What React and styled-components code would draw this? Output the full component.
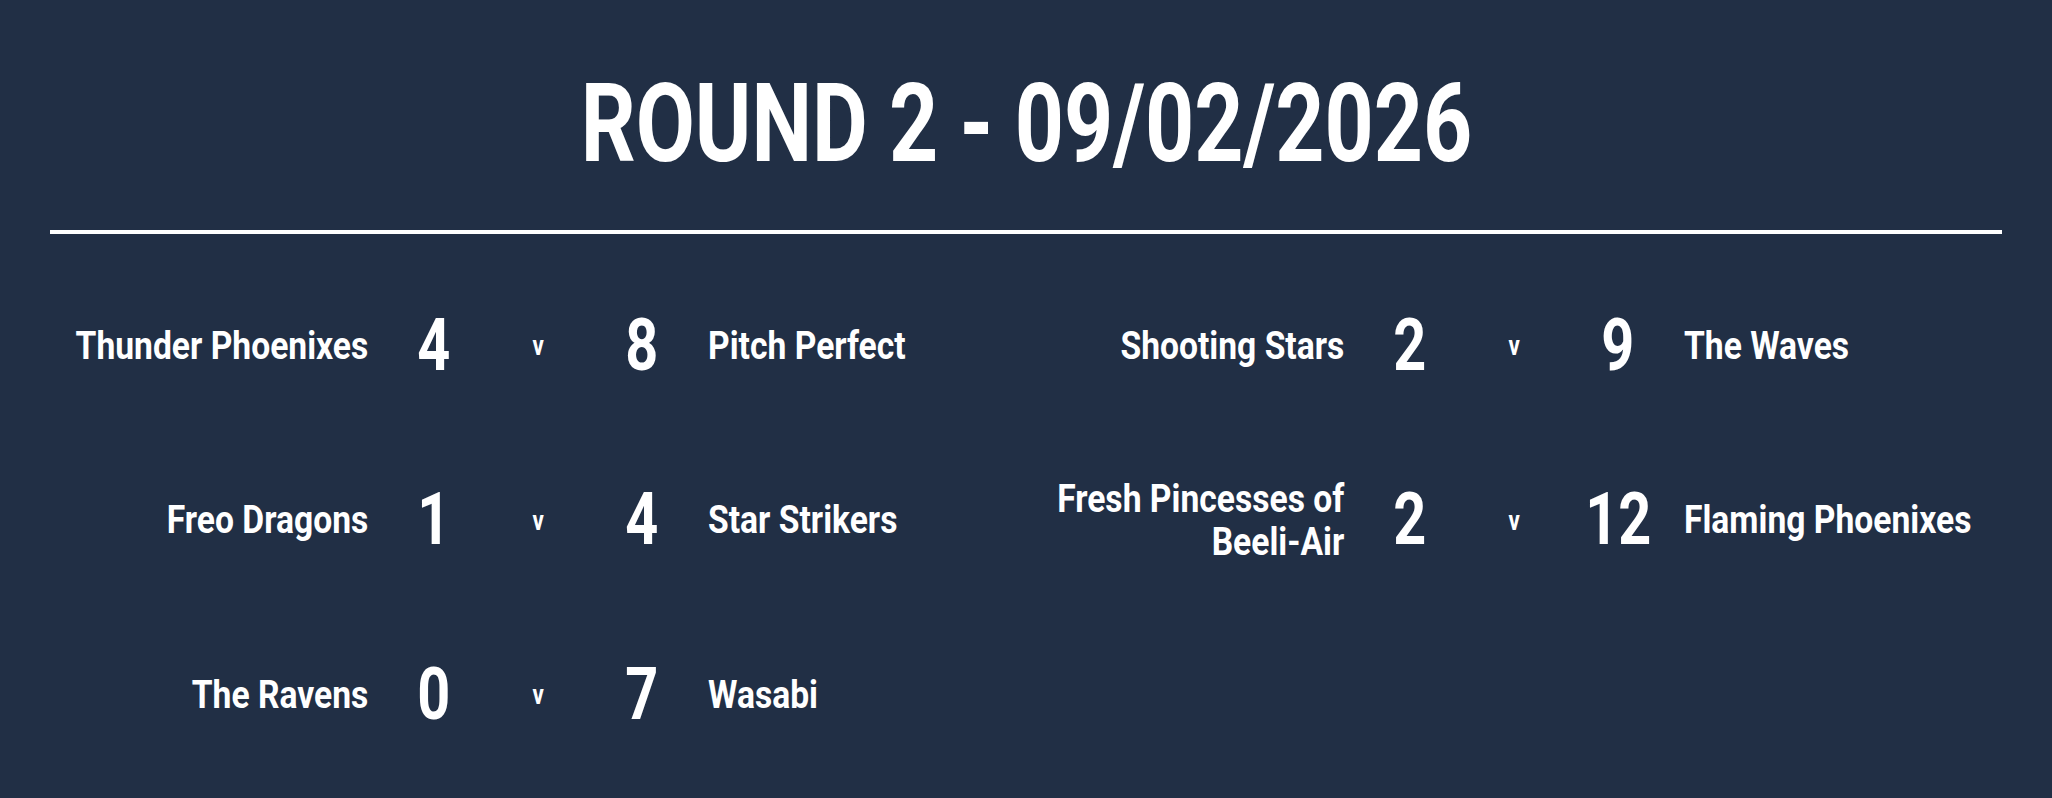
import styled, { createGlobalStyle } from 'styled-components'

// DIN-style condensed face isn't installed, so Roboto gets squeezed horizontally
const TITLE_SQUEEZE = 0.78
const NAME_SQUEEZE = 0.885
const SCORE_SQUEEZE = 0.8

const GlobalStyle = createGlobalStyle`
  html, body {
    margin: 0;
    background-color: #212f45;
  }

  body {
    font-family: Roboto, "Liberation Sans", sans-serif;
    color: #ffffff;
  }
`

const matches = [
  { home: 'Thunder Phoenixes', homeScore: 4, away: 'Pitch Perfect', awayScore: 8 },
  { home: 'Shooting Stars', homeScore: 2, away: 'The Waves', awayScore: 9 },
  { home: 'Freo Dragons', homeScore: 1, away: 'Star Strikers', awayScore: 4 },
  { home: 'Fresh Pincesses of Beeli-Air', homeScore: 2, away: 'Flaming Phoenixes', awayScore: 12 },
  { home: 'The Ravens', homeScore: 0, away: 'Wasabi', awayScore: 7 },
]

export default function App() {
  return (
    <>
      <GlobalStyle />
      <Page>
        <Title>
          <Squeezed $scale={TITLE_SQUEEZE}>ROUND 2 - 09/02/2026</Squeezed>
        </Title>
        <Divider />
        <MatchGrid>
          {matches.map((m) => (
            <Match key={m.home}>
              <Team>
                <TeamLabel $side="home">{m.home}</TeamLabel>
              </Team>
              <Score>
                <Squeezed $scale={SCORE_SQUEEZE}>{m.homeScore}</Squeezed>
              </Score>
              <Versus>
                <Squeezed $scale={SCORE_SQUEEZE}>v</Squeezed>
              </Versus>
              <Score>
                <Squeezed $scale={SCORE_SQUEEZE}>{m.awayScore}</Squeezed>
              </Score>
              <Team>
                <TeamLabel $side="away">{m.away}</TeamLabel>
              </Team>
            </Match>
          ))}
        </MatchGrid>
      </Page>
    </>
  )
}

const Page = styled.main`
  min-height: 798px;
  box-sizing: border-box;
  padding: 69px 50px 0;
  background-color: #212f45;
`

const Squeezed = styled.span`
  display: inline-block;
  transform: scaleX(${(p) => p.$scale});
  transform-origin: center;
`

const Title = styled.h1`
  margin: 0;
  font-size: 110px;
  line-height: 1;
  font-weight: 700;
  text-align: center;
  white-space: nowrap;
`

const Divider = styled.hr`
  margin: 51px 0 0;
  height: 4px;
  border: none;
  background-color: #ffffff;
`

const MatchGrid = styled.section`
  display: grid;
  grid-template-columns: 1fr 1fr;
  row-gap: 88px;
  margin-top: 69px;
`

const Match = styled.div`
  display: grid;
  grid-template-columns: 1fr 132px 76px 132px 1fr;
  align-items: center;
  min-height: 86px;
`

const Team = styled.div`
  font-size: 38px;
  line-height: 1.12;
  font-weight: 700;
`

const TeamLabel = styled.span`
  display: block;
  width: ${100 / NAME_SQUEEZE}%;
  margin-left: ${(p) => (p.$side === 'home' ? `${100 - 100 / NAME_SQUEEZE}%` : '0')};
  text-align: ${(p) => (p.$side === 'home' ? 'right' : 'left')};
  transform: scaleX(${NAME_SQUEEZE});
  transform-origin: ${(p) => (p.$side === 'home' ? 'right' : 'left')} center;
`

const Score = styled.div`
  font-size: 72px;
  line-height: 1.2;
  font-weight: 700;
  text-align: center;
`

const Versus = styled.div`
  font-size: 28px;
  line-height: 1;
  font-weight: 700;
  text-align: center;
`
